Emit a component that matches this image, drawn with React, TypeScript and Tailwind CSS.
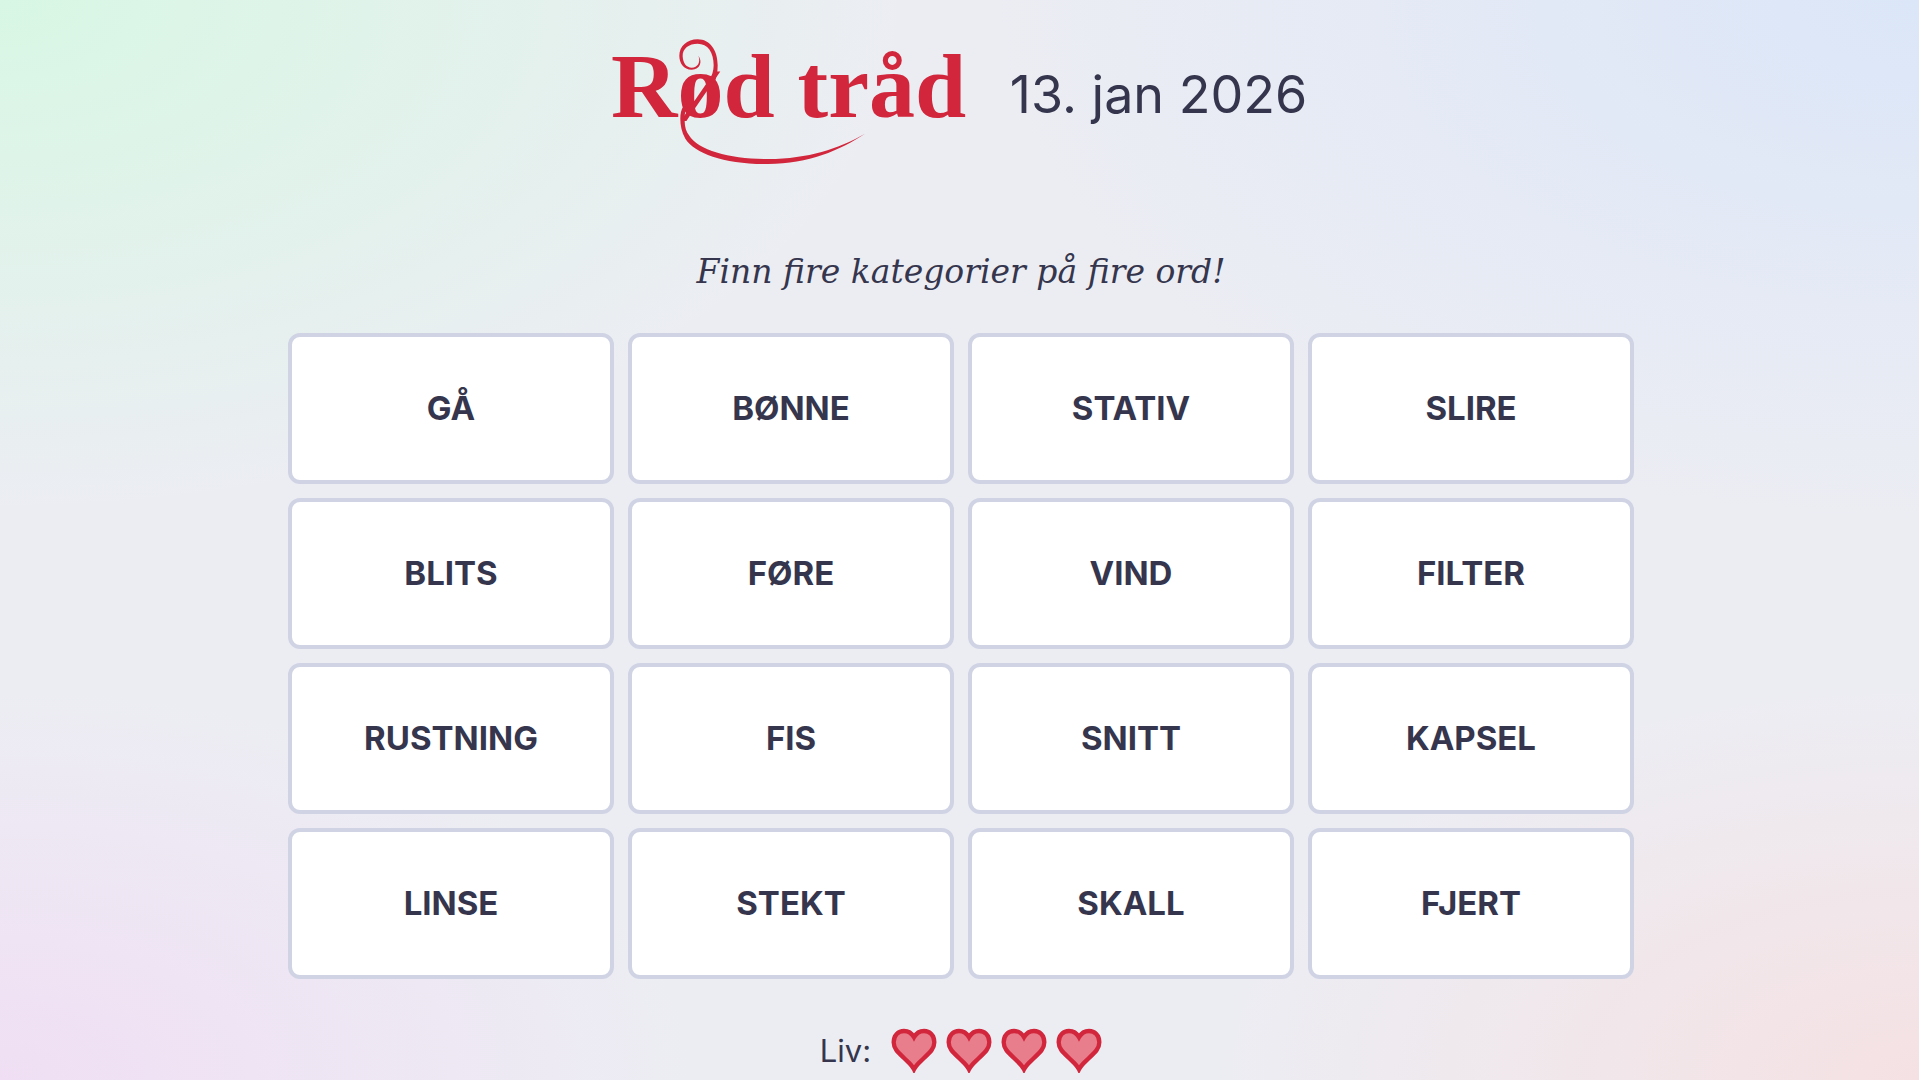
const words = [
  "GÅ", "BØNNE", "STATIV", "SLIRE",
  "BLITS", "FØRE", "VIND", "FILTER",
  "RUSTNING", "FIS", "SNITT", "KAPSEL",
  "LINSE", "STEKT", "SKALL", "FJERT",
];

function Logo() {
  return (
    <svg viewBox="70 50 1065 390" className="h-[130px] w-[355px] overflow-visible text-[#d1263b]" role="img" aria-label="Rød tråd">
      <text x="58" y="289" fill="currentColor" fontSize="276" className="font-['Liberation_Serif',serif] font-bold">
        Rød tråd
      </text>
      {/* curl above the ø */}
      <path
        fill="currentColor"
        d="M320 106C333 122 326 148 300 148C276 148 263 128 263 106C263 78 286 57 318 57C355 57 378 90 378 135C378 155 375 172 368 188L352 182C361 168 366 150 366 135C366 95 348 70 318 70C292 70 272 84 273 108C274 130 285 142 300 142C318 142 328 125 320 106Z"
      />
      {/* thread below the ø */}
      <path
        fill="currentColor"
        d="M284 262C279 273 279 288 279 302C279 320 284 335 292 345C320 392 420 417 530 416C650 415 740 385 820 340C745 390 650 430 530 431C400 432 310 400 281 355C270 335 266 315 266 295C266 280 268 268 276 256Z"
      />
    </svg>
  );
}

function Heart() {
  return (
    <svg viewBox="0 0 138 135" className="h-[45px] w-[46px]" aria-hidden="true">
      <path
        d="M69 124C62 110 52 103 39 90C22 74 8 62 8 43C8 22 22 9 39 9C52 9 63 17 69 28C75 17 86 9 99 9C116 9 130 22 130 43C130 62 116 74 99 90C86 103 76 110 69 124Z"
        fill="#e87d8b"
        stroke="#d1263b"
        strokeWidth="13"
      />
    </svg>
  );
}

export default function App() {
  return (
    <main className="flex min-h-screen flex-col items-center bg-[#ecedf3] bg-[radial-gradient(ellipse_at_0%_0%,#d8f7e4,transparent_34%),radial-gradient(ellipse_at_100%_0%,#dbe6f8,transparent_34%),radial-gradient(ellipse_at_0%_100%,#f0dff4,transparent_26%),radial-gradient(ellipse_at_100%_100%,#f5e1e3,transparent_26%)] pt-[37px] pl-[3px] font-['Inter',sans-serif] text-[#35364d]">
      <header className="flex h-[130px] items-start gap-10">
        <h1>
          <Logo />
        </h1>
        <time dateTime="2026-01-13" className="pt-[26px] text-[52px] leading-[64px]">
          13. jan 2026
        </time>
      </header>

      <p className="mt-[85px] font-['DejaVu_Serif',serif] text-[33px] leading-10 italic">
        Finn fire kategorier på fire ord!
      </p>

      <div className="mt-[41px] grid w-full max-w-[1346px] grid-cols-4 gap-[14px]">
        {words.map((word) => (
          <button
            key={word}
            type="button"
            className="h-[151px] rounded-xl border-4 border-[#cfd3e4] bg-white text-[33px] font-bold"
          >
            {word}
          </button>
        ))}
      </div>

      <div className="mt-[49px] flex items-center gap-5">
        <span className="text-[31px] leading-10">Liv:</span>
        <div className="flex gap-[9px]" role="img" aria-label="4 liv igjen">
          <Heart />
          <Heart />
          <Heart />
          <Heart />
        </div>
      </div>
    </main>
  );
}
